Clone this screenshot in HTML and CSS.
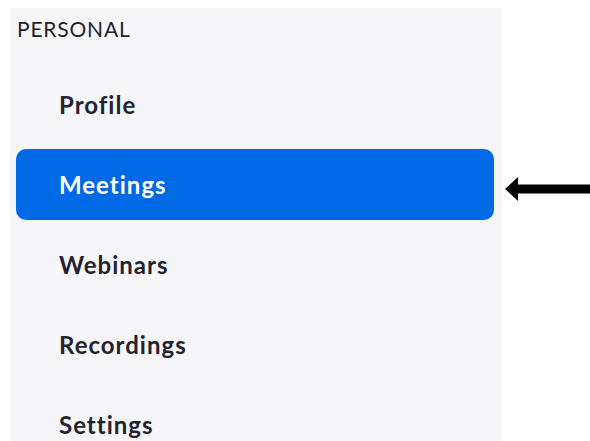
FILE: index.html
```html
<!DOCTYPE html>
<html lang="en">
<head>
<meta charset="utf-8">
<title>Personal</title>
<link rel="stylesheet" href="styles.css">
</head>
<body>
  <div class="page">
    <nav class="sidebar">
      <div class="section-title">PERSONAL</div>
      <ul class="menu">
        <li class="menu-item">Profile</li>
        <li class="menu-item active">Meetings</li>
        <li class="menu-item">Webinars</li>
        <li class="menu-item">Recordings</li>
        <li class="menu-item">Settings</li>
      </ul>
    </nav>
    <div class="pointer">
      <svg class="arrow" width="85" height="26" viewBox="0 0 85 26">
        <polygon points="0,13 13,1 13,8.5 85,8.5 85,17.5 13,17.5 13,25" fill="#000"/>
      </svg>
    </div>
  </div>
</body>
</html>
```

FILE: styles.css
```css
html, body {
  margin: 0;
  padding: 0;
  background: #ffffff;
}

body {
  font-family: "Lato", "Noto Sans", sans-serif;
  color: #232333;
  width: 590px;
  height: 441px;
  overflow: hidden;
}

.page {
  display: flex;
  align-items: flex-start;
  padding: 8px 0 0 10px;
}

.sidebar {
  width: 492px;
  height: 433px;
  background: #f6f6f8;
  flex-shrink: 0;
}

.section-title {
  font-size: 21px;
  line-height: 24px;
  padding: 9px 0 0 7px;
  letter-spacing: 0.8px;
}

.menu {
  list-style: none;
  margin: 28px 0 0;
  padding: 0 8px 0 6px;
  display: flex;
  flex-direction: column;
  gap: 9px;
}

.menu-item {
  height: 71px;
  line-height: 71px;
  padding-left: 43px;
  font-size: 24px;
  font-weight: 700;
  letter-spacing: 1px;
  border-radius: 10px;
}

.menu-item.active {
  background: #0069e6;
  color: #ffffff;
}

.pointer {
  flex: 1;
  display: flex;
  justify-content: flex-end;
  padding-top: 168px;
}

.arrow {
  display: block;
}
```
